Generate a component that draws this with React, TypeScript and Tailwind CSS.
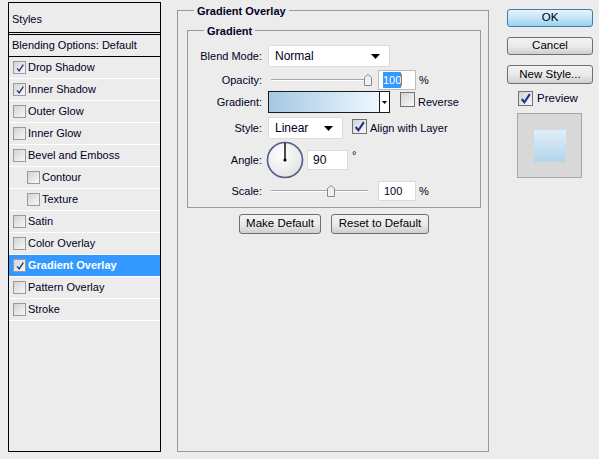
import React from "react";

const font = { fontFamily: '"Liberation Sans", Arial, sans-serif' };

function Check({ on, big }: { on?: boolean; big?: boolean }) {
  return (
    <span
      className={
        "relative inline-flex shrink-0 items-center justify-center border bg-gradient-to-br from-[#d4d4d4] to-[#f8f8f8] " +
        (big ? "h-[15px] w-[15px] border-[#707070]" : "h-[13px] w-[13px] border-[#9a9a9a]")
      }
    >
      {on && (
        <svg viewBox="0 0 12 12" className={big ? "h-[13px] w-[13px]" : "h-[10px] w-[10px]"}>
          <path d="M2.5 6.5 L5 9.5 L10 2" fill="none" stroke="#24348c" strokeWidth={big ? 2 : 1.6} />
        </svg>
      )}
    </span>
  );
}

type Row = { label: string; on?: boolean; sub?: boolean; sel?: boolean };

const rows: Row[] = [
  { label: "Drop Shadow", on: true },
  { label: "Inner Shadow", on: true },
  { label: "Outer Glow" },
  { label: "Inner Glow" },
  { label: "Bevel and Emboss" },
  { label: "Contour", sub: true },
  { label: "Texture", sub: true },
  { label: "Satin" },
  { label: "Color Overlay" },
  { label: "Gradient Overlay", on: true, sel: true },
  { label: "Pattern Overlay" },
  { label: "Stroke" },
];

function Slider({ pos }: { pos: number }) {
  return (
    <div className="relative h-full w-[104px]">
      <div className="absolute left-[3px] right-[4px] top-1/2 h-[2px] -translate-y-1/2 border-t border-[#a8a8a8] bg-white" />
      <svg
        viewBox="0 0 8 12"
        className="absolute top-1/2 h-[12px] w-[8px] -translate-y-[6px]"
        style={{ left: pos }}
      >
        <path d="M0.5 11.5 V3.5 L4 0.5 L7.5 3.5 V11.5 Z" fill="#f0f0f0" stroke="#8a8a8a" />
      </svg>
    </div>
  );
}

function Btn({ children, w, primary }: { children: React.ReactNode; w: string; primary?: boolean }) {
  return (
    <div
      className={
        "flex items-center justify-center rounded-[3px] border text-[11.5px] text-black " +
        w +
        (primary
          ? " border-[#3c7fb1] bg-gradient-to-b from-[#e5f4fc] via-[#c4e5f6] to-[#98d1ef]"
          : " border-[#707070] bg-gradient-to-b from-[#f2f2f2] via-[#ebebeb] to-[#cfcfcf]")
      }
    >
      {children}
    </div>
  );
}

function Arrow() {
  return (
    <svg viewBox="0 0 9 5" className="h-[5px] w-[9px]">
      <path d="M0 0 H9 L4.5 5 Z" fill="#000" />
    </svg>
  );
}

export default function App() {
  return (
    <div className="flex h-[459px] w-[599px] items-start bg-[#ececec] text-[11px] text-[#000022]" style={font}>
      {/* styles list */}
      <div className="ml-[8px] mt-[2px] flex h-[450px] w-[153px] flex-col border border-black">
        <div className="flex h-[29px] items-center pl-[3px] pt-[3px]">Styles</div>
        <div className="h-[3px] border-y border-black" />
        <div className="flex h-[22px] items-center border-b border-black pl-[3px]">Blending Options: Default</div>
        {rows.map((r) => (
          <div
            key={r.label}
            className={
              "flex h-[22px] items-center gap-[1px] border-b border-white " +
              (r.sub ? "pl-[18px] " : "pl-[4px] ") +
              (r.sel ? "bg-[#3399ff] font-bold text-white" : "")
            }
          >
            <Check on={r.on} />
            <span className="pl-[1px]">{r.label}</span>
          </div>
        ))}
      </div>

      {/* main panel */}
      <div className="relative ml-[16px] mt-[10px] flex h-[442px] w-[312px] flex-col border border-[#9a9a9a]">
        <span className="absolute -top-[8px] left-[16px] bg-[#ececec] px-[3px] font-bold">Gradient Overlay</span>
        <div className="relative ml-[9px] mt-[19px] h-[178px] w-[294px] border border-[#9a9a9a]">
          <span className="absolute -top-[8px] left-[16px] bg-[#ececec] px-[3px] font-bold">Gradient</span>

          <div className="mt-[14px] flex h-[22px] items-center">
            <span className="w-[74px] text-right">Blend Mode:</span>
            <div className="ml-[6px] flex h-full w-[122px] items-center justify-between border border-[#dcdcdc] bg-white pl-[6px] pr-[9px] text-[12px]">
              Normal
              <Arrow />
            </div>
          </div>

          <div className="mt-[3px] flex h-[20px] items-center">
            <span className="w-[74px] text-right">Opacity:</span>
            <div className="ml-[6px] h-full">
              <Slider pos={96} />
            </div>
            <div className="ml-[6px] flex h-full w-[38px] items-center border border-[#bcbcbc] bg-white pl-[4px]">
              <span className="bg-[#3399ff] text-white">100</span>
              <span className="h-[12px] w-[1px] bg-[#e07000]" />
            </div>
            <span className="ml-[3px]">%</span>
          </div>

          <div className="mt-[1px] flex h-[22px] items-center">
            <span className="w-[74px] text-right">Gradient:</span>
            <div className="ml-[6px] flex h-full w-[122px] border border-[#1a1a1a]">
              <div className="flex-1 bg-gradient-to-r from-[#a4c9e2] to-[#eef8fe]" />
              <div className="flex w-[10px] items-center justify-center border-l border-[#1a1a1a] bg-white">
                <svg viewBox="0 0 5 3" className="h-[3px] w-[5px]">
                  <path d="M0 0 H5 L2.5 3 Z" fill="#000" />
                </svg>
              </div>
            </div>
            <span className="ml-[10px]">
              <Check big />
            </span>
            <span className="ml-[3px]">Reverse</span>
          </div>

          <div className="mt-[4px] flex h-[22px] items-center">
            <span className="w-[74px] text-right">Style:</span>
            <div className="ml-[6px] flex h-full w-[75px] items-center justify-between border border-[#dcdcdc] bg-white pl-[6px] pr-[9px] text-[12px]">
              Linear
              <Arrow />
            </div>
            <span className="ml-[9px]">
              <Check on big />
            </span>
            <span className="ml-[3px]">Align with Layer</span>
          </div>

          <div className="mt-[2px] flex h-[38px] items-center">
            <span className="w-[74px] text-right">Angle:</span>
            <svg viewBox="0 0 38 38" className="ml-[4px] h-[38px] w-[38px]">
              <defs>
                <radialGradient id="dial" cx="40%" cy="35%" r="70%">
                  <stop offset="0" stopColor="#ffffff" />
                  <stop offset="1" stopColor="#e2e2e2" />
                </radialGradient>
              </defs>
              <circle cx="19" cy="19" r="17.5" fill="url(#dial)" stroke="#4f5f86" strokeWidth="1.6" />
              <line x1="19" y1="19" x2="19" y2="2" stroke="#000" strokeWidth="1.4" />
              <circle cx="19" cy="19" r="1.6" fill="#000" />
            </svg>
            <div className="ml-[3px] flex h-[20px] w-[41px] items-center border border-[#dcdcdc] bg-white pl-[5px] text-[12px]">
              90
            </div>
            <span className="ml-[4px] self-start pt-[6px]">°</span>
          </div>

          <div className="mt-[2px] flex h-[20px] items-center">
            <span className="w-[74px] text-right">Scale:</span>
            <div className="ml-[6px] h-full">
              <Slider pos={59} />
            </div>
            <div className="ml-[6px] flex h-full w-[38px] items-center border border-[#dcdcdc] bg-white pl-[5px]">
              100
            </div>
            <span className="ml-[3px]">%</span>
          </div>
        </div>

        <div className="mt-[6px] flex justify-center gap-[10px] pl-[2px]">
          <Btn w="h-[20px] w-[82px]">Make Default</Btn>
          <Btn w="h-[20px] w-[98px]">Reset to Default</Btn>
        </div>
      </div>

      {/* right column */}
      <div className="ml-[18px] mt-[9px] flex w-[86px] flex-col">
        <Btn w="h-[18px] w-[86px]" primary>
          OK
        </Btn>
        <div className="mt-[10px]">
          <Btn w="h-[18px] w-[86px]">Cancel</Btn>
        </div>
        <div className="mt-[10px]">
          <Btn w="h-[19px] w-[86px]">New Style...</Btn>
        </div>
        <div className="ml-[11px] mt-[6px] flex items-center gap-[4px] text-[11.5px]">
          <Check on big />
          Preview
        </div>
        <div className="ml-[10px] mt-[6px] flex h-[65px] w-[65px] items-center justify-center border border-[#a8a8a8] bg-[#d8d8d8]">
          <div className="h-[32px] w-[32px] bg-gradient-to-b from-[#e0eefa] to-[#b3d4ea]" />
        </div>
      </div>
    </div>
  );
}
